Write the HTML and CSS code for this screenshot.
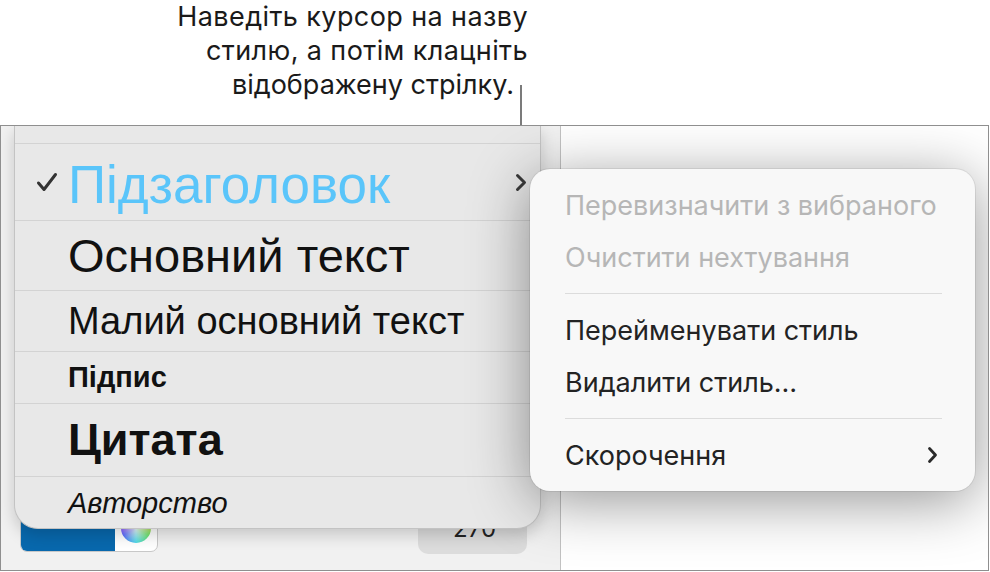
FILE: index.html
```html
<!DOCTYPE html>
<html lang="uk">

<head>
    <meta charset="UTF-8">
    <meta name="viewport" content="width=device-width, initial-scale=1.0">
    <title>Стилі абзацу</title>
    <link rel="stylesheet" href="styles.css">
</head>

<body>
    <div class="page">
        <div class="callout">
            <span>Наведіть курсор на назву</span>
            <span>стилю, а потім клацніть</span>
            <span class="callout-last">відображену стрілку.</span>
        </div>
        <span class="leader"></span>

        <div class="window">
            <aside class="inspector">
                <div class="inspector-row">
                    <div class="color-well">
                        <span class="well-fill"></span>
                        <span class="well-wheel"></span>
                    </div>
                    <div class="angle-field">270°</div>
                </div>
            </aside>
            <div class="canvas"></div>

            <!-- paragraph styles popup -->
            <div class="style-list">
                <div class="style-row row-cut"></div>
                <div class="style-row row-subhead">
                    <span class="mark">
                        <svg width="22" height="20" viewBox="0 0 22 20"><path d="M2.5 11 L8 17.5 L19.5 2.5" fill="none" stroke="#333" stroke-width="3" stroke-linecap="round" stroke-linejoin="round"/></svg>
                    </span>
                    <span class="style-name name-subhead">Підзаголовок</span>
                    <svg class="row-arrow" width="12" height="19" viewBox="0 0 12 19"><path d="M2.5 2.5 L9.5 9.5 L2.5 16.5" fill="none" stroke="#3a3a3a" stroke-width="3" stroke-linecap="round" stroke-linejoin="round"/></svg>
                </div>
                <div class="style-row row-body">
                    <span class="style-name name-body">Основний текст</span>
                </div>
                <div class="style-row row-small">
                    <span class="style-name name-small">Малий основний текст</span>
                </div>
                <div class="style-row row-caption">
                    <span class="style-name name-caption">Підпис</span>
                </div>
                <div class="style-row row-quote">
                    <span class="style-name name-quote">Цитата</span>
                </div>
                <div class="style-row row-author">
                    <span class="style-name name-author">Авторство</span>
                </div>
            </div>

            <!-- style actions menu -->
            <div class="context-menu">
                <div class="menu-item is-disabled">Перевизначити з вибраного</div>
                <div class="menu-item is-disabled">Очистити нехтування</div>
                <div class="menu-sep"></div>
                <div class="menu-item">Перейменувати стиль</div>
                <div class="menu-item">Видалити стиль…</div>
                <div class="menu-sep"></div>
                <div class="menu-item">
                    <span>Скорочення</span>
                    <svg class="sub-arrow" width="11" height="18" viewBox="0 0 11 18"><path d="M2.5 2.5 L8.5 9 L2.5 15.5" fill="none" stroke="#2a2a2a" stroke-width="2.8" stroke-linecap="round" stroke-linejoin="round"/></svg>
                </div>
            </div>
        </div>
    </div>
</body>

</html>
```

FILE: styles.css
```css
body {
    margin: 0;
    background-color: #fff;
    font-family: 'Inter', 'Liberation Sans', sans-serif;
    color: #1d1d1d;
}

.page {
    position: relative;
    width: 990px;
    height: 572px;
    overflow: hidden;
}

.callout {
    display: flex;
    flex-direction: column;
    align-items: flex-end;
    width: 528px;
    height: 125px;
    font-size: 27px;
    line-height: 34px;
    color: #1a1a1a;
    white-space: nowrap;
}

.callout span:not(.callout-last) {
    letter-spacing: 0.4px;
}

.callout-last {
    margin-right: 14px;
}

.leader {
    position: absolute;
    left: 520px;
    top: 85px;
    width: 2px;
    height: 88px;
    background-color: #7b7b7b;
}

.window {
    position: relative;
    display: flex;
    width: 989px;
    height: 446px;
    box-sizing: border-box;
    border: 1px solid #8f8f8f;
    overflow: hidden;
}

.inspector {
    flex: none;
    width: 560px;
    box-sizing: border-box;
    border-right: 1px solid #c2c2c2;
    background-color: #f1f1f1;
    display: flex;
    flex-direction: column;
    justify-content: flex-end;
    padding: 0 33px 16px 19px;
}

.inspector-row {
    display: flex;
    justify-content: space-between;
    align-items: flex-end;
}

.color-well {
    display: flex;
    width: 138px;
    height: 48px;
    margin-bottom: 2px;
    box-sizing: border-box;
    border: 1px solid #c8c8c8;
    border-radius: 7px;
    background-color: #fff;
    overflow: hidden;
}

.well-fill {
    width: 94px;
    background-color: #0868ad;
}

.well-wheel {
    width: 30px;
    height: 30px;
    margin: auto;
    border-radius: 50%;
    background:
        radial-gradient(circle, rgba(255, 255, 255, 0.9), rgba(255, 255, 255, 0) 70%),
        conic-gradient(#ff5a5a, #ffd84a, #6be36b, #4ad8e8, #5a6cff, #d45aff, #ff5a5a);
}

.angle-field {
    width: 109px;
    height: 50px;
    box-sizing: border-box;
    padding: 3px 20px 0 0;
    border-radius: 10px;
    background-color: #dcdcdc;
    font-size: 24px;
    line-height: 44px;
    text-align: right;
    color: #222;
}

.canvas {
    flex: 1;
    background-color: #fff;
}

/* styles popup */
.style-list {
    position: absolute;
    left: 13px;
    top: 0;
    width: 527px;
    box-sizing: border-box;
    background-color: #e8e8e8;
    border: 1px solid #c3c3c3;
    border-top: none;
    border-radius: 0 0 24px 24px;
    box-shadow: 0 6px 16px rgba(0, 0, 0, 0.18);
    overflow: hidden;
    font-family: 'Liberation Sans', Arial, sans-serif;
}

.style-row {
    display: flex;
    align-items: center;
    padding: 0 13px 0 53px;
    border-bottom: 1px solid #d3d3d3;
    color: #111;
}

.row-cut { height: 17px; }
.row-subhead { height: 76px; }
.row-body { height: 69px; }
.row-small { height: 60px; }
.row-caption { height: 51px; }
.row-quote { height: 72px; }
.row-author { height: 51px; border-bottom: none; }

.mark {
    display: flex;
    width: 32px;
    margin-left: -32px;
}

.style-name {
    white-space: nowrap;
}

.name-subhead {
    font-size: 53px;
    color: #5ac5fa;
    padding-top: 4px;
}

.name-body { font-size: 47px; }
.name-small { font-size: 38px; }
.name-caption { font-size: 29px; font-weight: bold; }
.name-quote { font-size: 45px; font-weight: bold; }
.name-author { font-size: 29px; font-style: italic; padding-top: 2px; }

.row-arrow {
    margin-left: auto;
}

/* context menu */
.context-menu {
    position: absolute;
    left: 529px;
    top: 43px;
    width: 445px;
    box-sizing: border-box;
    padding: 10px 0;
    background-color: #f8f8f8;
    border-radius: 20px;
    box-shadow: 0 0 0 1px rgba(0, 0, 0, 0.07), 0 10px 60px rgba(0, 0, 0, 0.42);
    font-size: 27px;
    color: #232323;
}

.menu-item {
    display: flex;
    align-items: center;
    height: 52px;
    padding: 0 37px 0 35px;
    white-space: nowrap;
}

.menu-item.is-disabled {
    color: #b6b6b6;
}

.menu-sep {
    height: 1px;
    margin: 10px 33px 10px 35px;
    background-color: #dcdcdc;
}

.sub-arrow {
    margin-left: auto;
}
```
